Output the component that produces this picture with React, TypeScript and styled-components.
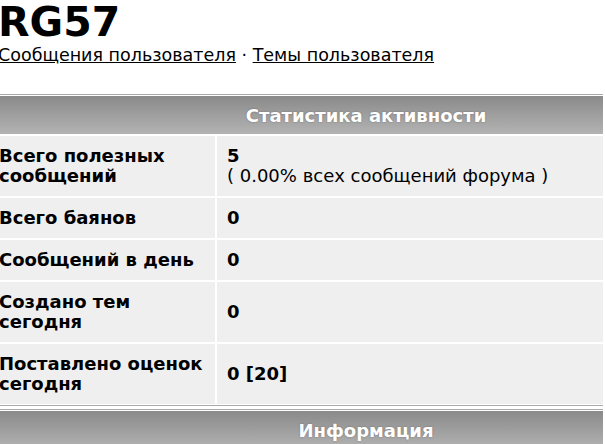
import React from "react";
import styled, { createGlobalStyle } from "styled-components";

const Global = createGlobalStyle`
  html, body { margin: 0; padding: 0; background: #ffffff; }
  body { font-family: "DejaVu Sans", Verdana, sans-serif; color: #000; overflow: hidden; }
`;

const Page = styled.div`
  margin-left: -2px;
  width: 607px;
`;

const Title = styled.h1`
  margin: 0;
  font-size: 41px;
  line-height: 45px;
  font-weight: bold;
`;

const Links = styled.div`
  font-size: 17.5px;
  line-height: 21px;
`;

const Link = styled.a`
  color: #000;
  text-decoration: underline;
`;

const Panel = styled.section<{ $first?: boolean }>`
  width: 605px;
  margin-top: ${(p) => (p.$first ? "28px" : "3px")};
  border-top: 1px solid #a9a9a9;
  border-bottom: 1px solid #a9a9a9;
  padding: 1px 0;
`;

const Grid = styled.div`
  display: grid;
  grid-template-columns: 217px 1fr;
  gap: 2px;
`;

const Head = styled.div`
  grid-column: 1 / -1;
  height: 38px;
  display: flex;
  align-items: center;
  justify-content: center;
  padding-left: 131px;
  background: linear-gradient(#8a8a8a, #b3b3b3);
  color: #fff;
  font-size: 18px;
  font-weight: bold;
  text-shadow: 0 0 2px rgba(0, 0, 0, 0.3);
`;

const Cell = styled.div<{ $label?: boolean }>`
  background: #efefef;
  display: flex;
  flex-direction: column;
  justify-content: center;
  padding: 10px 4px 10px ${(p) => (p.$label ? "1px" : "10px")};
  font-size: 18px;
  line-height: 20px;
  font-weight: ${(p) => (p.$label ? "bold" : "normal")};
`;

const Strong = styled.span`
  font-weight: bold;
`;

const rows: { label: string; value: React.ReactNode }[] = [
  {
    label: "Всего полезных сообщений",
    value: (
      <>
        <Strong>5</Strong>
        <span>( 0.00% всех сообщений форума )</span>
      </>
    ),
  },
  { label: "Всего баянов", value: <Strong>0</Strong> },
  { label: "Сообщений в день", value: <Strong>0</Strong> },
  { label: "Создано тем сегодня", value: <Strong>0</Strong> },
  { label: "Поставлено оценок сегодня", value: <Strong>0 [20]</Strong> },
];

export default function App() {
  return (
    <Page>
      <Global />
      <Title>RG57</Title>
      <Links>
        <Link href="#">Сообщения пользователя</Link> · <Link href="#">Темы пользователя</Link>
      </Links>
      <Panel $first>
        <Grid>
          <Head>Статистика активности</Head>
          {rows.map((r) => (
            <React.Fragment key={r.label}>
              <Cell $label>{r.label}</Cell>
              <Cell>{r.value}</Cell>
            </React.Fragment>
          ))}
        </Grid>
      </Panel>
      <Panel>
        <Grid>
          <Head>Информация</Head>
        </Grid>
      </Panel>
    </Page>
  );
}
